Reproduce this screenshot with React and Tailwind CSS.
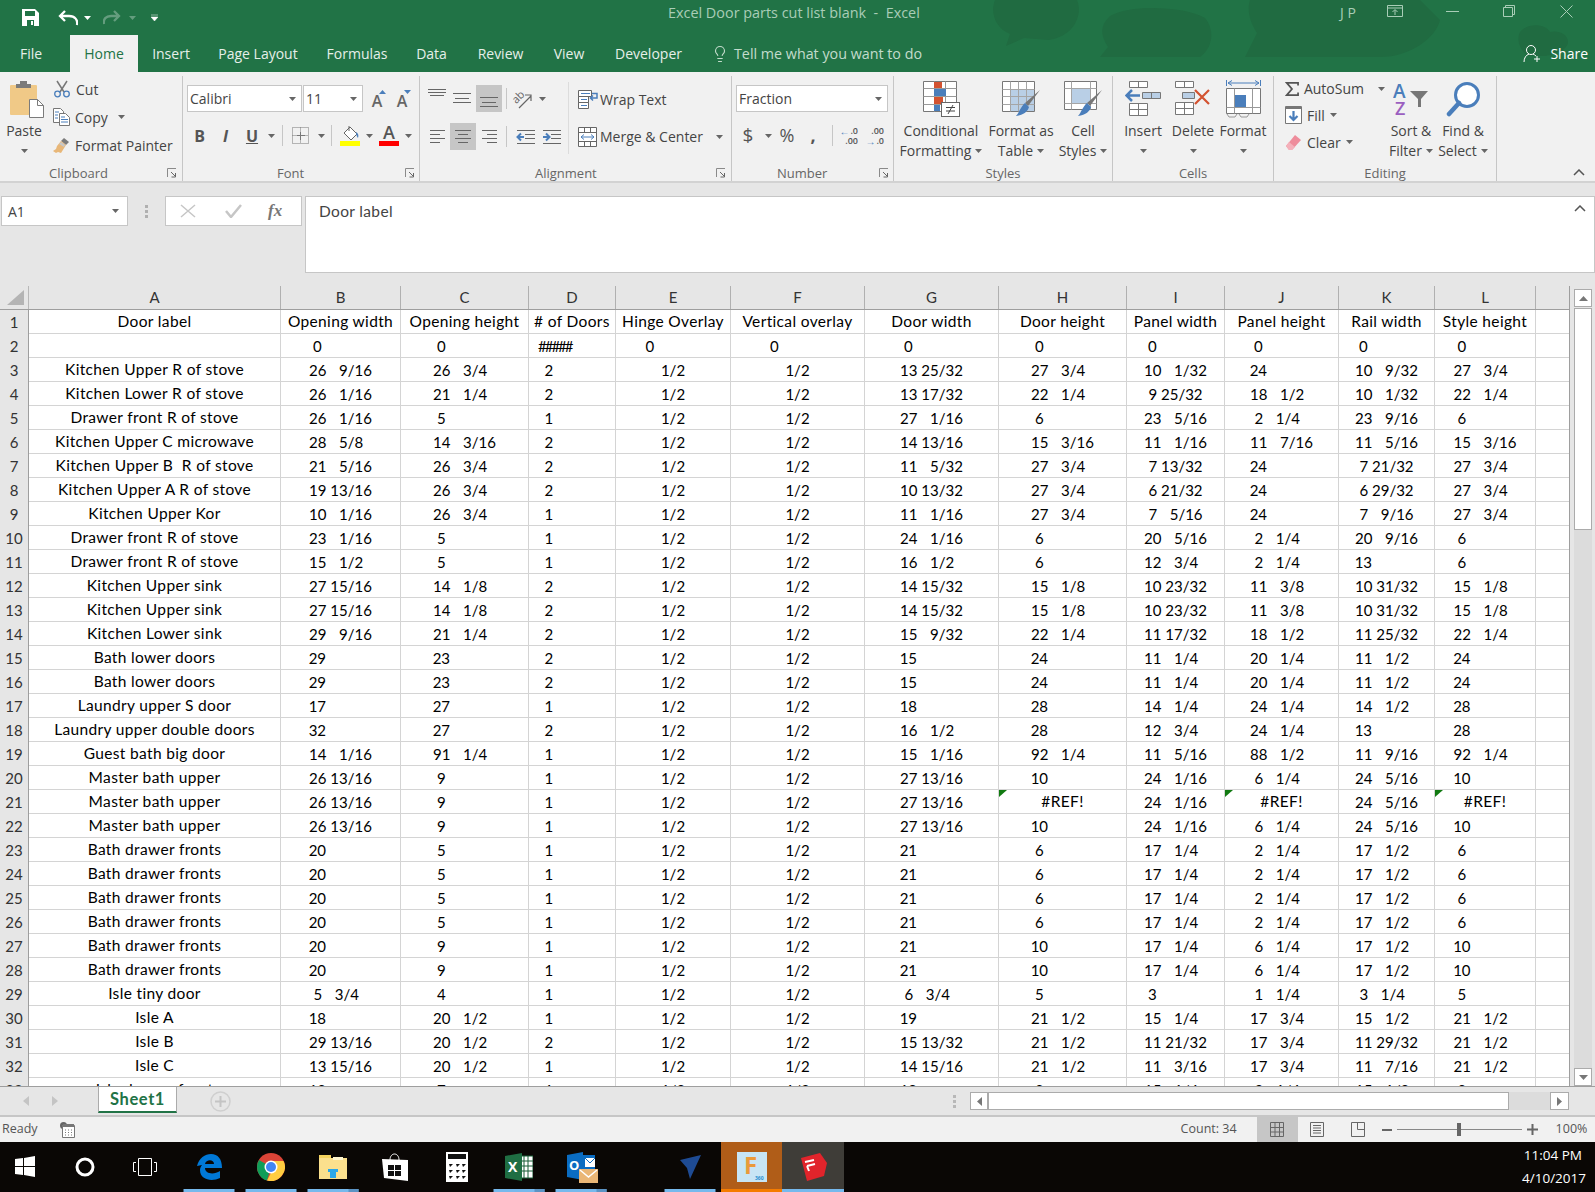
import { Lightbulb } from "lucide-react";

const gridCols = "grid grid-cols-[29px_252px_120px_128px_87px_115px_134px_134px_128px_98px_114px_96px_101px_35px]";
const letters = ["A", "B", "C", "D", "E", "F", "G", "H", "I", "J", "K", "L"];
const headers = ["Door label", "Opening width", "Opening height", "# of Doors", "Hinge Overlay", "Vertical overlay", "Door width", "Door height", "Panel width", "Panel height", "Rail width", "Style height"];
const labelText = "text-[15.500px] tracking-[0.35px]";

const K = "\u2007";

// same padding excel gives a "# ??/??" format
function frac(value) {
  if (value === undefined || value.startsWith("#")) return value;
  const [whole, part] = value.split(" ");
  if (!part) return `${whole} ${K}${K}  ${K}${K}`;
  const [num, den] = part.split("/");
  return `${whole} ${num.length < 2 ? K : ""}${num}/${den}${den.length < 2 ? K : ""}`;
}

const rows = [
  ["Kitchen Upper R of stove", "26 9/16", "26 3/4", "2", "13 25/32", "27 3/4", "10 1/32", "24", "10 9/32", "27 3/4"],
  ["Kitchen Lower R of stove", "26 1/16", "21 1/4", "2", "13 17/32", "22 1/4", "9 25/32", "18 1/2", "10 1/32", "22 1/4"],
  ["Drawer front R of stove", "26 1/16", "5", "1", "27 1/16", "6", "23 5/16", "2 1/4", "23 9/16", "6"],
  ["Kitchen Upper C microwave", "28 5/8", "14 3/16", "2", "14 13/16", "15 3/16", "11 1/16", "11 7/16", "11 5/16", "15 3/16"],
  ["Kitchen Upper B  R of stove", "21 5/16", "26 3/4", "2", "11 5/32", "27 3/4", "7 13/32", "24", "7 21/32", "27 3/4"],
  ["Kitchen Upper A R of stove", "19 13/16", "26 3/4", "2", "10 13/32", "27 3/4", "6 21/32", "24", "6 29/32", "27 3/4"],
  ["Kitchen Upper Kor", "10 1/16", "26 3/4", "1", "11 1/16", "27 3/4", "7 5/16", "24", "7 9/16", "27 3/4"],
  ["Drawer front R of stove", "23 1/16", "5", "1", "24 1/16", "6", "20 5/16", "2 1/4", "20 9/16", "6"],
  ["Drawer front R of stove", "15 1/2", "5", "1", "16 1/2", "6", "12 3/4", "2 1/4", "13", "6"],
  ["Kitchen Upper sink", "27 15/16", "14 1/8", "2", "14 15/32", "15 1/8", "10 23/32", "11 3/8", "10 31/32", "15 1/8"],
  ["Kitchen Upper sink", "27 15/16", "14 1/8", "2", "14 15/32", "15 1/8", "10 23/32", "11 3/8", "10 31/32", "15 1/8"],
  ["Kitchen Lower sink", "29 9/16", "21 1/4", "2", "15 9/32", "22 1/4", "11 17/32", "18 1/2", "11 25/32", "22 1/4"],
  ["Bath lower doors", "29", "23", "2", "15", "24", "11 1/4", "20 1/4", "11 1/2", "24"],
  ["Bath lower doors", "29", "23", "2", "15", "24", "11 1/4", "20 1/4", "11 1/2", "24"],
  ["Laundry upper S door", "17", "27", "1", "18", "28", "14 1/4", "24 1/4", "14 1/2", "28"],
  ["Laundry upper double doors", "32", "27", "2", "16 1/2", "28", "12 3/4", "24 1/4", "13", "28"],
  ["Guest bath big door", "14 1/16", "91 1/4", "1", "15 1/16", "92 1/4", "11 5/16", "88 1/2", "11 9/16", "92 1/4"],
  ["Master bath upper", "26 13/16", "9", "1", "27 13/16", "10", "24 1/16", "6 1/4", "24 5/16", "10"],
  ["Master bath upper", "26 13/16", "9", "1", "27 13/16", "#REF!", "24 1/16", "#REF!", "24 5/16", "#REF!"],
  ["Master bath upper", "26 13/16", "9", "1", "27 13/16", "10", "24 1/16", "6 1/4", "24 5/16", "10"],
  ["Bath drawer fronts", "20", "5", "1", "21", "6", "17 1/4", "2 1/4", "17 1/2", "6"],
  ["Bath drawer fronts", "20", "5", "1", "21", "6", "17 1/4", "2 1/4", "17 1/2", "6"],
  ["Bath drawer fronts", "20", "5", "1", "21", "6", "17 1/4", "2 1/4", "17 1/2", "6"],
  ["Bath drawer fronts", "20", "5", "1", "21", "6", "17 1/4", "2 1/4", "17 1/2", "6"],
  ["Bath drawer fronts", "20", "9", "1", "21", "10", "17 1/4", "6 1/4", "17 1/2", "10"],
  ["Bath drawer fronts", "20", "9", "1", "21", "10", "17 1/4", "6 1/4", "17 1/2", "10"],
  ["Isle tiny door", "5 3/4", "4", "1", "6 3/4", "5", "3", "1 1/4", "3 1/4", "5"],
  ["Isle A", "18", "20 1/2", "1", "19", "21 1/2", "15 1/4", "17 3/4", "15 1/2", "21 1/2"],
  ["Isle B", "29 13/16", "20 1/2", "2", "15 13/32", "21 1/2", "11 21/32", "17 3/4", "11 29/32", "21 1/2"],
  ["Isle C", "13 15/16", "20 1/2", "1", "14 15/16", "21 1/2", "11 3/16", "17 3/4", "11 7/16", "21 1/2"],
  ["Isle drawer front", "18", "7", "1", "19", "8", "15 1/4", "3 1/4", "15 1/2", "8"],
];

function Caret({ color = "#666" }) {
  return (
    <svg width="7" height="4" viewBox="0 0 7 4" className="shrink-0">
      <path d="M0 0h7L3.5 4z" fill={color} />
    </svg>
  );
}

function Lines({ w = 20, h = 27, lines }) {
  return (
    <svg width={w} height={h} viewBox={`0 0 ${w} ${h}`}>
      {lines.map(([a, b, y]) => (
        <path key={y} d={`M${a} ${y + 0.5}H${b}`} stroke="#666" />
      ))}
    </svg>
  );
}

function Slot({ className = "", children }) {
  return <div className={`flex h-[27px] shrink-0 items-center justify-center ${className}`}>{children}</div>;
}

function Sep() {
  return <div className="h-[21px] w-px shrink-0 bg-[#c6c6c6]" />;
}

function Launcher() {
  return (
    <svg width="10" height="10" viewBox="0 0 10 10" className="shrink-0">
      <path d="M.5 9V.5H9" fill="none" stroke="#8a8a8a" />
      <path d="M4 4l4 4M8.5 5v4h-4" fill="none" stroke="#666" />
    </svg>
  );
}

function GroupLabel({ children, className = "" }) {
  return (
    <div className={`flex h-[16px] items-center pt-[2px] text-[13px] leading-none text-[#666] ${className}`}>
      {children}
    </div>
  );
}

function BigButton({ icon, top, bottom, className = "" }) {
  return (
    <div className={`flex shrink-0 flex-col items-center ${className}`}>
      <div className="flex h-[45px] items-center">{icon}</div>
      <div className="h-[20px] whitespace-nowrap leading-[20px]">{top}</div>
      <div className="flex h-[20px] items-center gap-[4px] whitespace-nowrap leading-[20px]">
        {bottom}
        <Caret />
      </div>
    </div>
  );
}

function Combo({ className = "", text }) {
  return (
    <div className={`flex h-[27px] items-center justify-between border border-[#c6c6c6] bg-white pl-[2px] pr-[5px] text-[14px] ${className}`}>
      <span>{text}</span>
      <Caret />
    </div>
  );
}

function PasteIcon() {
  return (
    <svg width="34" height="38" viewBox="0 0 34 38">
      <rect x="0" y="5" width="27" height="30" rx="1" fill="#f0c987" />
      <path d="M10 4V1h7v3h4v4H6V4z" fill="#7b7b7b" />
      <path d="M19.500 19.500h8l6 6v12h-14z" fill="#fff" stroke="#7b7b7b" />
      <path d="M27.500 19.500v6h6" fill="none" stroke="#7b7b7b" />
    </svg>
  );
}

function ScissorsIcon() {
  return (
    <svg width="18" height="18" viewBox="0 0 18 18">
      <path d="M4 1l7 11M14 1L7 12" stroke="#777" strokeWidth="1.500" fill="none" />
      <circle cx="4.500" cy="14" r="2.800" fill="none" stroke="#4a7ebb" strokeWidth="1.300" />
      <circle cx="13.500" cy="14" r="2.800" fill="none" stroke="#4a7ebb" strokeWidth="1.300" />
    </svg>
  );
}

function CopyIcon() {
  return (
    <svg width="17" height="18" viewBox="0 0 17 18">
      <path d="M.5.500h7l3 3v11H.5z" fill="#fff" stroke="#777" />
      <path d="M6.500 5.500h6l4 4v8h-10z" fill="#fff" stroke="#777" />
      <path d="M2 4h4M2 7h3M2 10h3M8 9h4M8 11.500h7M8 14h7" stroke="#4a7ebb" />
    </svg>
  );
}

function PainterIcon() {
  return (
    <svg width="17" height="17" viewBox="0 0 17 17">
      <path d="M11 1l5 4-3 3-5-4z" fill="#7b7b7b" />
      <path d="M8 4l5 4-5 8-3-1-2 1-3-2 3-2 1-3z" fill="#e8b778" />
      <path d="M8 5l4 3-1 2-5-3z" fill="#c8c8c8" />
    </svg>
  );
}

function FontAIcon({ up }) {
  return (
    <div className="relative flex h-[22px] w-[14px] items-end justify-center text-[16px] font-semibold leading-[18px] text-[#666]">
      A
      <svg width="7" height="4" viewBox="0 0 7 4" className="absolute right-[-2px] top-[2px]">
        <path d={up ? "M0 4h7L3.500 0z" : "M0 0h7L3.500 4z"} fill="#4a7ebb" />
      </svg>
    </div>
  );
}

function BordersIcon() {
  return (
    <svg width="17" height="17" viewBox="0 0 17 17">
      <path d="M.5.500h16v16H.5zM8.500.5v16M.5 8.500h16" fill="none" stroke="#777" strokeDasharray="1 1" />
      <path d="M5 8.500h8M8.500 5v8" stroke="#777" />
    </svg>
  );
}

function FillIcon() {
  return (
    <div className="flex w-[20px] flex-col items-center">
      <svg width="20" height="15" viewBox="0 0 20 15">
        <path d="M10 1l7 7-6 6-7-7z" fill="#fff" stroke="#666" />
        <path d="M9 0v5" stroke="#666" />
        <path d="M16 6c2 1 3 3 2 6-1-1-2-3-2-6z" fill="#4a7ebb" />
      </svg>
      <div className="h-[5px] w-[20px] bg-[#ffff00]" />
    </div>
  );
}

function FontColorIcon() {
  return (
    <div className="flex w-[20px] flex-col items-center">
      <span className="text-[18px] font-semibold leading-[15px] text-[#555]">A</span>
      <div className="mt-[1px] h-[5px] w-[20px] bg-[#ff0000]" />
    </div>
  );
}

function OrientIcon() {
  return (
    <svg width="22" height="20" viewBox="0 0 22 20">
      <text x="1" y="13" fontSize="11" fill="#666" transform="rotate(-45 6 9)" fontFamily="Open Sans">ab</text>
      <path d="M8 19L20 7M14 6h6v6" fill="none" stroke="#666" strokeWidth="1.200" />
    </svg>
  );
}

function IndentIcon({ increase }) {
  return (
    <svg width="20" height="14" viewBox="0 0 20 14">
      <path d="M1 .500h18M9 4.500h10M9 8.500h10M1 13.500h18" stroke="#666" />
      {increase ? (
        <path d="M1 7h6M4 3.500L7.500 7 4 10.500" fill="none" stroke="#4a7ebb" strokeWidth="2" />
      ) : (
        <path d="M8 7H2M5 3.500L1.500 7 5 10.500" fill="none" stroke="#4a7ebb" strokeWidth="2" />
      )}
    </svg>
  );
}

function WrapIcon() {
  return (
    <svg width="20" height="19" viewBox="0 0 20 19">
      <path d="M.5.500h13v6H.5zM.5 6.500h10v6H.5zM.5 12.500h10v6H.5z" fill="#fff" stroke="#666" />
      <path d="M3 3.500h9M3 9.500h6M3 15.500h6" stroke="#4a7ebb" />
      <path d="M14 3.500h5v4.500h-6M15 5.500L12.500 8l2.500 2.500" fill="none" stroke="#4a7ebb" strokeWidth="1.500" />
    </svg>
  );
}

function MergeIcon() {
  return (
    <svg width="19" height="20" viewBox="0 0 19 20">
      <path d="M.5.500h18v19H.5zM.5 5.500h18M.5 14.500h18M6.500.5v5M12.500.5v5M6.500 14.500v5M12.500 14.500v5" fill="#fff" stroke="#666" />
      <path d="M3 10h13M6 7.500L3 10l3 2.500M13 7.500l3 2.500-3 2.500" fill="none" stroke="#4a7ebb" />
    </svg>
  );
}

function DecimalIcon({ more }) {
  return (
    <div className="flex w-[18px] flex-col text-[9px] font-semibold leading-[10px] text-[#555]">
      <div className="flex h-[10px] items-center justify-end gap-[1px]">
        {more && <span className="text-[10px] leading-none text-[#4a7ebb]">←</span>}
        <span>{more ? ".0" : ".00"}</span>
      </div>
      <div className="flex h-[10px] items-center justify-end gap-[1px]">
        {!more && <span className="text-[10px] leading-none text-[#4a7ebb]">→</span>}
        <span>{more ? ".00" : ".0"}</span>
      </div>
    </div>
  );
}

function CondIcon() {
  return (
    <svg width="37" height="36" viewBox="0 0 37 36">
      <path d="M.5.500h33v30H.5z" fill="#fff" stroke="#777" />
      <path d="M11.500.5v30M22.500.5v30M.5 7.500h33M.5 15.500h33M.5 23.500h33" stroke="#999" />
      <rect x="11" y="1" width="8" height="6" fill="#d35230" />
      <rect x="11" y="8" width="12" height="7" fill="#4a7ebb" />
      <rect x="11" y="16" width="9" height="7" fill="#d35230" />
      <rect x="11" y="24" width="6" height="6" fill="#4a7ebb" />
      <rect x="18.500" y="21.500" width="18" height="14" fill="#fff" stroke="#666" />
      <path d="M23 26.500h9M23 30h9M30 24l-5 9" stroke="#444" fill="none" />
    </svg>
  );
}

function BrushOverlay() {
  return (
    <>
      <path d="M38 9L26 25l-3-3z" fill="#777" />
      <path d="M23 22l4 4c-1 4-5 8-13 9 3-3 5-10 9-13z" fill="#4a7ebb" />
    </>
  );
}

function TableIcon() {
  return (
    <svg width="38" height="36" viewBox="0 0 38 36">
      <path d="M.5.500h32v30H.5z" fill="#fff" stroke="#777" />
      <rect x="8" y="8" width="24" height="22" fill="#b9cfe6" />
      <path d="M8.500.5v30M16.500.5v30M24.500.5v30M.5 8.500h32M.5 15.500h32M.5 23.500h32" stroke="#a5a5a5" />
      <BrushOverlay />
    </svg>
  );
}

function CellStyleIcon() {
  return (
    <svg width="38" height="36" viewBox="0 0 38 36">
      <path d="M.5.500h32v28H.5z" fill="#fff" stroke="#777" />
      <rect x="8" y="8" width="18" height="14" fill="#b9cfe6" />
      <path d="M7.500.5v28M26.500.5v28M.5 7.500h32M.5 22.500h32" stroke="#a5a5a5" />
      <BrushOverlay />
    </svg>
  );
}

function InsertIcon() {
  return (
    <svg width="36" height="36" viewBox="0 0 36 36">
      <path d="M4.500.5h18v6h-18zM13.500.5v6M4.500 22.500h18v12h-18zM4.500 28.500h18M13.500 22.500v12" fill="#fff" stroke="#777" />
      <path d="M17.500 11.500h18v6h-18zM26.500 11.500v6" fill="#b9cfe6" stroke="#777" />
      <path d="M15 14.500H2M7 9l-5.500 5.500L7 20" fill="none" stroke="#4a7ebb" strokeWidth="2.500" />
    </svg>
  );
}

function DeleteIcon() {
  return (
    <svg width="36" height="36" viewBox="0 0 36 36">
      <path d="M.5.500h18v6H.5zM9.500.5v6M.5 21.500h18v12H.5zM.5 27.500h18M9.500 21.500v12" fill="#fff" stroke="#777" />
      <path d="M7.500 11.500h12v6h-12z" fill="#b9cfe6" stroke="#777" />
      <path d="M20 9l14 14M34 9L20 23" stroke="#d35230" strokeWidth="2.200" />
    </svg>
  );
}

function FormatIcon() {
  return (
    <svg width="35" height="38" viewBox="0 0 35 38">
      <path d="M.5 0v6M34.500 0v6M2 3h31M6 .500L2 3l4 2.500M29 .500L33 3l-4 2.500" fill="none" stroke="#4a7ebb" />
      <path d="M.5 8.500h34v25H.5z" fill="#fff" stroke="#777" />
      <path d="M8.500 8.500v25M26.500 8.500v25M.5 27.500h34" stroke="#999" />
      <rect x="9" y="15" width="11" height="12" fill="#4a7ebb" />
      <path d="M1 34l2 3h6l2-3M13 34l2 3h6l2-3" fill="none" stroke="#999" />
    </svg>
  );
}

function SigmaIcon() {
  return (
    <svg width="16" height="16" viewBox="0 0 16 16">
      <path d="M15 4V1H2l6 7-6 7h13v-3" fill="none" stroke="#555" strokeWidth="2" />
    </svg>
  );
}

function FillDownIcon() {
  return (
    <svg width="17" height="18" viewBox="0 0 17 18">
      <path d="M.5.500h16v17H.5z" fill="#fff" stroke="#777" />
      <path d="M1 1h15v2H1z" fill="#777" />
      <path d="M8.500 5v9M4.500 10l4 4 4-4" fill="none" stroke="#4a7ebb" strokeWidth="2.200" />
    </svg>
  );
}

function EraserIcon() {
  return (
    <svg width="17" height="17" viewBox="0 0 17 17">
      <path d="M10 1l6 5-9 10H4l-3-4z" fill="#ee8c9b" />
      <path d="M4 8l6 5-3 3H4l-3-4z" fill="#f4b0ba" />
    </svg>
  );
}

function SortIcon() {
  return (
    <svg width="36" height="34" viewBox="0 0 36 34">
      <text x="0" y="16" fontSize="19" fontWeight="600" fill="#4a7ebb" fontFamily="Open Sans">A</text>
      <text x="2" y="33" fontSize="18" fontWeight="600" fill="#9b5fc0" fontFamily="Open Sans">Z</text>
      <path d="M17 9h18l-7 8v8h-3v-8z" fill="#777" />
    </svg>
  );
}

function FindIcon() {
  return (
    <svg width="35" height="36" viewBox="0 0 35 36">
      <circle cx="21" cy="14" r="11.500" fill="#fff" stroke="#4a7ebb" strokeWidth="3" />
      <path d="M13 22L3 33" stroke="#4a7ebb" strokeWidth="4.500" strokeLinecap="round" />
    </svg>
  );
}

function Clipboard() {
  return (
    <div className="flex w-[183px] shrink-0 flex-col border-r border-[#c6c6c6]">
      <div className="flex h-[88px]">
        <div className="flex w-[50px] shrink-0 flex-col items-center pr-[2px]">
          <div className="flex h-[45px] items-center pl-[6px]">
            <PasteIcon />
          </div>
          <div className="h-[20px] leading-[20px]">Paste</div>
          <div className="flex h-[20px] items-center">
            <Caret />
          </div>
        </div>
        <div className="-mt-[1px] flex flex-col pl-[3px]">
          <div className="flex h-[28px] items-center gap-[5px]">
            <ScissorsIcon />
            Cut
          </div>
          <div className="flex h-[28px] items-center gap-[5px]">
            <CopyIcon />
            Copy
            <span className="ml-[5px]">
              <Caret />
            </span>
          </div>
          <div className="flex h-[28px] items-center gap-[5px] whitespace-nowrap">
            <PainterIcon />
            Format Painter
          </div>
        </div>
      </div>
      <GroupLabel className="pl-[49px]">
        Clipboard
        <span className="ml-[59px]">
          <Launcher />
        </span>
      </GroupLabel>
    </div>
  );
}

function FontGroup() {
  return (
    <div className="flex w-[237px] shrink-0 flex-col border-r border-[#c6c6c6]">
      <div className="flex h-[88px] flex-col gap-[10px] pl-[4px] pt-[9px]">
        <div className="flex h-[27px] items-center gap-[1px]">
          <Combo className="w-[115px]" text="Calibri" />
          <Combo className="w-[60px]" text="11" />
          <div className="ml-[6px]">
            <FontAIcon up />
          </div>
          <div className="ml-[10px]">
            <FontAIcon />
          </div>
        </div>
        <div className="flex h-[27px] items-center">
          <Slot className="w-[25px] text-[16px] font-bold text-[#555]">B</Slot>
          <Slot className="w-[27px] text-[16px] font-bold italic text-[#555]">I</Slot>
          <Slot className="w-[26px] text-[16px] font-bold text-[#555] underline">U</Slot>
          <Slot className="w-[12px]"><Caret /></Slot>
          <div className="w-[5px]" />
          <Sep />
          <Slot className="w-[34px]"><BordersIcon /></Slot>
          <Slot className="w-[9px]"><Caret /></Slot>
          <div className="w-[5px]" />
          <Sep />
          <Slot className="w-[33px] pl-[3px]"><FillIcon /></Slot>
          <Slot className="w-[9px]"><Caret /></Slot>
          <Slot className="w-[30px]"><FontColorIcon /></Slot>
          <Slot className="w-[8px]"><Caret /></Slot>
        </div>
      </div>
      <GroupLabel className="pl-[94px]">
        Font
        <span className="ml-[101px]">
          <Launcher />
        </span>
      </GroupLabel>
    </div>
  );
}

function AlignmentGroup() {
  return (
    <div className="flex w-[312px] shrink-0 flex-col border-r border-[#c6c6c6]">
      <div className="flex h-[88px]">
        <div className="flex w-[148px] shrink-0 flex-col gap-[11px] pl-[5px] pt-[9px]">
          <div className="flex h-[27px] items-center">
            <Slot className="w-[24px]"><Lines w={18} lines={[[0, 18, 4], [0, 18, 7], [2, 16, 10]]} /></Slot>
            <Slot className="w-[26px]"><Lines w={18} lines={[[0, 18, 8], [2, 16, 13], [0, 18, 17]]} /></Slot>
            <Slot className="ml-px w-[26px] bg-[#c6c6c6]"><Lines w={18} lines={[[0, 18, 12], [2, 16, 17], [0, 18, 21]]} /></Slot>
            <div className="w-[4px]" />
            <Sep />
            <Slot className="w-[30px]"><OrientIcon /></Slot>
            <Slot className="w-[10px]"><Caret /></Slot>
          </div>
          <div className="flex h-[27px] items-center">
            <Slot className="w-[25px]"><Lines w={15} lines={[[0, 15, 7], [0, 10, 11], [0, 15, 15], [0, 10, 19]]} /></Slot>
            <Slot className="w-[26px] bg-[#c6c6c6]"><Lines w={16} lines={[[0, 16, 7], [3, 13, 11], [0, 16, 15], [3, 13, 19]]} /></Slot>
            <Slot className="w-[26px]"><Lines w={15} lines={[[0, 15, 7], [5, 15, 11], [0, 15, 15], [5, 15, 19]]} /></Slot>
            <div className="w-[4px]" />
            <Sep />
            <div className="w-[6px]" />
            <Slot className="w-[26px]"><IndentIcon /></Slot>
            <Slot className="w-[26px]"><IndentIcon increase /></Slot>
          </div>
        </div>
        <div className="mt-[6px] h-[72px] w-px bg-[#dcdcdc]" />
        <div className="flex flex-col gap-[11px] pl-[9px] pt-[9px]">
          <div className="flex h-[27px] items-center gap-[2px] whitespace-nowrap pt-[1px]">
            <WrapIcon />
            Wrap Text
          </div>
          <div className="flex h-[27px] items-center gap-[3px] whitespace-nowrap">
            <MergeIcon />
            Merge &amp; Center
            <span className="ml-[10px]">
              <Caret />
            </span>
          </div>
        </div>
      </div>
      <GroupLabel className="pl-[115px]">
        Alignment
        <span className="ml-[119px]">
          <Launcher />
        </span>
      </GroupLabel>
    </div>
  );
}

function NumberGroup() {
  return (
    <div className="flex w-[162px] shrink-0 flex-col border-r border-[#c6c6c6]">
      <div className="flex h-[88px] flex-col gap-[10px] pl-[4px] pt-[9px]">
        <Combo className="w-[152px]" text="Fraction" />
        <div className="flex h-[27px] items-center">
          <Slot className="w-[24px] text-[19px] text-[#555]">$</Slot>
          <Slot className="w-[16px]"><Caret /></Slot>
          <Slot className="w-[22px] text-[18px] text-[#555]">%</Slot>
          <Slot className="w-[30px] text-[18px] font-bold text-[#555]">,</Slot>
          <div className="w-[4px]" />
          <Sep />
          <Slot className="w-[32px]"><DecimalIcon more /></Slot>
          <Slot className="w-[20px]"><DecimalIcon /></Slot>
        </div>
      </div>
      <GroupLabel className="pl-[45px]">
        Number
        <span className="ml-[52px]">
          <Launcher />
        </span>
      </GroupLabel>
    </div>
  );
}

function StylesGroup() {
  return (
    <div className="flex w-[219px] shrink-0 flex-col border-r border-[#c6c6c6]">
      <div className="flex h-[88px] pl-[4px]">
        <BigButton className="w-[86px]" icon={<CondIcon />} top="Conditional" bottom="Formatting" />
        <BigButton className="w-[74px]" icon={<TableIcon />} top="Format as" bottom="Table" />
        <BigButton className="w-[50px]" icon={<CellStyleIcon />} top="Cell" bottom="Styles" />
      </div>
      <GroupLabel className="justify-center">Styles</GroupLabel>
    </div>
  );
}

function CellsGroup() {
  return (
    <div className="flex w-[161px] shrink-0 flex-col border-r border-[#c6c6c6]">
      <div className="flex h-[88px] pl-[5px]">
        <BigButton className="w-[50px]" icon={<InsertIcon />} top="Insert" />
        <BigButton className="w-[50px]" icon={<DeleteIcon />} top="Delete" />
        <BigButton className="w-[50px]" icon={<FormatIcon />} top="Format" />
      </div>
      <GroupLabel className="justify-center">Cells</GroupLabel>
    </div>
  );
}

function EditingGroup() {
  return (
    <div className="flex w-[223px] shrink-0 flex-col border-r border-[#c6c6c6]">
      <div className="flex h-[88px]">
        <div className="-mt-[1px] flex w-[111px] shrink-0 flex-col pl-[11px]">
          <div className="flex h-[27px] items-center gap-[5px]">
            <SigmaIcon />
            AutoSum
            <span className="ml-[9px]">
              <Caret />
            </span>
          </div>
          <div className="flex h-[26px] items-center gap-[5px]">
            <FillDownIcon />
            Fill
            <Caret />
          </div>
          <div className="flex h-[28px] items-center gap-[5px]">
            <EraserIcon />
            Clear
            <Caret />
          </div>
        </div>
        <BigButton className="w-[52px]" icon={<SortIcon />} top="Sort &" bottom="Filter" />
        <BigButton className="w-[52px]" icon={<FindIcon />} top="Find &" bottom="Select" />
      </div>
      <GroupLabel className="justify-center">Editing</GroupLabel>
    </div>
  );
}

function Ribbon() {
  return (
    <div className="flex h-[111px] shrink-0 border-b-2 border-[#d2d2d2] bg-[#f1f1f1] pt-[4px] text-[14px] text-[#444]">
      <Clipboard />
      <FontGroup />
      <AlignmentGroup />
      <NumberGroup />
      <StylesGroup />
      <CellsGroup />
      <EditingGroup />
      <div className="flex flex-1 items-end justify-end pb-[5px] pr-[10px]">
        <svg width="12" height="7" viewBox="0 0 12 7">
          <path d="M1 6l5-5 5 5" fill="none" stroke="#555" strokeWidth="1.500" />
        </svg>
      </div>
    </div>
  );
}

function TitleBar() {
  return (
    <div className="relative h-[72px] shrink-0 bg-[#217346] text-white">
      <svg width="695" height="57" viewBox="0 0 695 57" className="absolute right-0 top-0">
        <path d="M95 0h82c6 14-2 36-28 40l-25-2-18 8 4-12C95 28 90 12 95 0z" fill="#206b41" />
        <path d="M210 16c20-12 75-10 95 2 10 12 8 30-5 39H200l8-10c-8-12-8-22 2-31z" fill="#206b41" />
        <path d="M350 0h170l20 20c-4 18-30 37-60 37H345l12-24c-8-12-10-24-7-33z" fill="#206b41" />
        <path d="M620 32c8-10 26-8 30 0 8-2 18 2 18 10 0 8-14 12-22 14h-18c-8-6-12-16-8-24z" fill="#206b41" />
      </svg>
      <div className="relative flex h-[35px] items-center">
        <svg width="17" height="17" viewBox="0 0 17 17" className="ml-[22px]">
          <path d="M0 0h13l4 4v13H0z" fill="#fff" />
          <path d="M3 2h10v5H3z" fill="#217346" />
          <path d="M5 11h7v6H5z" fill="#217346" />
          <path d="M9 12h2v4H9z" fill="#fff" />
        </svg>
        <svg width="20" height="16" viewBox="0 0 20 16" className="ml-[19px]">
          <path d="M19 15c1-5-2-9-8-9H3M7 1L2 6l5 5" fill="none" stroke="#fff" strokeWidth="2.300" />
        </svg>
        <span className="ml-[6px]"><Caret color="#fff" /></span>
        <svg width="18" height="15" viewBox="0 0 18 15" className="ml-[12px] opacity-30">
          <path d="M1 14c-1-5 2-8 7-8h7M11 1l5 5-5 5" fill="none" stroke="#fff" strokeWidth="2.300" />
        </svg>
        <span className="ml-[8px] opacity-30"><Caret color="#fff" /></span>
        <svg width="7" height="7" viewBox="0 0 7 7" className="ml-[15px]">
          <path d="M0 1h7M0 3h7L3.500 7z" fill="#fff" stroke="#fff" strokeWidth=".5" />
        </svg>
        <div className="absolute left-[668px] top-[3px] whitespace-pre text-[14.400px] leading-[20px] text-[#a9cdb7]">
          Excel Door parts cut list blank  -  Excel
        </div>
        <div className="absolute left-[1340px] top-[3px] text-[14px] leading-[20px] text-[#a9cdb7]">J P</div>
        <svg width="16" height="12" viewBox="0 0 16 12" className="absolute left-[1387px] top-[5px]">
          <path d="M.5.500h15v11H.5zM.5 3h15M8 10V5M5.500 7L8 4.500 10.500 7" fill="none" stroke="#a9cdb7" />
        </svg>
        <svg width="13" height="1" viewBox="0 0 13 1" className="absolute left-[1446px] top-[11px]">
          <path d="M0 .5h13" stroke="#a9cdb7" />
        </svg>
        <svg width="12" height="12" viewBox="0 0 12 12" className="absolute left-[1503px] top-[5px]">
          <path d="M.5 2.500h9v9h-9zM2.500 2.500v-2h9v9h-2" fill="none" stroke="#a9cdb7" />
        </svg>
        <svg width="13" height="13" viewBox="0 0 13 13" className="absolute left-[1560px] top-[5px]">
          <path d="M.5.500l12 12M12.500.5l-12 12" stroke="#a9cdb7" />
        </svg>
      </div>
      <div className="relative flex h-[37px] items-stretch text-[14px] text-[#e6efe9]">
        <div className="flex w-[70px] items-center justify-center pr-[8px]">File</div>
        <div className="flex w-[68px] items-center justify-center bg-[#f1f1f1] text-[#217346]">Home</div>
        <div className="flex w-[15px]" />
        <div className="flex w-[36px] items-center justify-center">Insert</div>
        <div className="w-[29px]" />
        <div className="flex w-[80px] items-center justify-center whitespace-nowrap">Page Layout</div>
        <div className="w-[29px]" />
        <div className="flex w-[60px] items-center justify-center">Formulas</div>
        <div className="w-[29px]" />
        <div className="flex w-[31px] items-center justify-center">Data</div>
        <div className="w-[30px]" />
        <div className="flex w-[47px] items-center justify-center">Review</div>
        <div className="w-[29px]" />
        <div className="flex w-[32px] items-center justify-center">View</div>
        <div className="w-[29px]" />
        <div className="flex w-[69px] items-center justify-center">Developer</div>
        <div className="flex items-center gap-[5px] whitespace-nowrap pl-[28px] text-[14.300px] text-[#c3dccc]">
          <Lightbulb size={18} strokeWidth={1.500} />
          Tell me what you want to do
        </div>
        <div className="ml-auto flex items-center gap-[8px] pr-[7px] text-white">
          <svg width="19" height="19" viewBox="0 0 19 19">
            <circle cx="8" cy="6" r="4.500" fill="none" stroke="#fff" />
            <path d="M1 18c0-4 2-7 5-8M10 10c1 .5 2 1 3 2M14 12v6M11 15h6" fill="none" stroke="#fff" />
          </svg>
          Share
        </div>
      </div>
    </div>
  );
}

function FormulaBar() {
  return (
    <div className="flex h-[103px] shrink-0 items-start bg-[#e6e6e6] pt-[13px] text-[14px] text-[#444]">
      <div className="ml-[1px] flex h-[30px] w-[127px] items-center justify-between border border-[#c6c6c6] bg-white pl-[6px] pr-[8px]">
        A1
        <Caret />
      </div>
      <div className="flex h-[30px] w-[37px] flex-col items-center justify-center gap-[2px]">
        <div className="h-[3px] w-[3px] bg-[#b0b0b0]" />
        <div className="h-[3px] w-[3px] bg-[#b0b0b0]" />
        <div className="h-[3px] w-[3px] bg-[#b0b0b0]" />
      </div>
      <div className="flex h-[30px] w-[137px] items-center border border-[#c6c6c6] bg-white">
        <svg width="16" height="14" viewBox="0 0 16 14" className="ml-[14px]">
          <path d="M1 1l14 12M15 1L1 13" stroke="#c6c6c6" strokeWidth="1.500" />
        </svg>
        <svg width="17" height="14" viewBox="0 0 17 14" className="ml-[29px]">
          <path d="M1 7l5 6L16 1" fill="none" stroke="#c6c6c6" strokeWidth="2.500" />
        </svg>
        <span className="ml-[26px] font-['Liberation_Serif',serif] text-[17px] font-bold italic text-[#777]">fx</span>
      </div>
      <div className="ml-[3px] flex h-[77px] flex-1 items-start justify-between border border-[#c6c6c6] bg-white pl-[13px] pr-[8px] pt-[3px]">
        <span className={`font-['Lato',sans-serif] ${labelText}`}>Door label</span>
        <svg width="12" height="7" viewBox="0 0 12 7" className="mt-[5px]">
          <path d="M1 6l5-5 5 5" fill="none" stroke="#555" strokeWidth="1.500" />
        </svg>
      </div>
    </div>
  );
}

function ErrorMark() {
  return (
    <svg width="8" height="7" viewBox="0 0 8 7" className="absolute left-0 top-0">
      <path d="M0 0h8L0 7z" fill="#117a11" />
    </svg>
  );
}

function Row({ num, children }) {
  return (
    <div className={`${gridCols} h-[24px] border-b border-[#d4d4d4]`}>
      <div className="flex items-center justify-center border-r border-[#9e9e9e] bg-[#e6e6e6] pt-px text-[#333]">{num}</div>
      {children}
      <div />
    </div>
  );
}

function Cell({ value, center, label }) {
  const err = value === "#REF!";
  return (
    <div className={`relative flex items-center justify-center whitespace-pre border-r border-[#d4d4d4] ${label || err ? labelText : "pt-px"}`}>
      {err && <ErrorMark />}
      {center || err ? value : frac(value)}
    </div>
  );
}

function Grid() {
  return (
    <div className="h-[800px] w-[1570px] overflow-hidden border-r border-[#9e9e9e] bg-white font-['Lato',sans-serif] text-[15px] text-black">
      <div className={`${gridCols} h-[24px] border-b border-[#9e9e9e] bg-[#e6e6e6] text-[#333]`}>
        <div className="flex items-end justify-end border-r border-[#b8b8b8]">
          <svg width="19" height="17" viewBox="0 0 19 17" className="mb-[2px] mr-[2px]">
            <path d="M17 0v15H0z" fill="#b4b4b4" />
          </svg>
        </div>
        {letters.map((l) => (
          <div key={l} className="flex items-center justify-center border-r border-[#b0b0b0]">{l}</div>
        ))}
        <div className="border-r border-[#b0b0b0]" />
      </div>
      <Row num={1}>
        {headers.map((h) => (
          <Cell key={h} value={h} center label />
        ))}
      </Row>
      <Row num={2}>
        <Cell value="" center />
        <Cell value="0" />
        <Cell value="0" />
        <div className="flex items-center border-r border-[#d4d4d4] pl-[9px] pt-px tracking-[-2px]">#####</div>
        <Cell value="0" />
        <Cell value="0" />
        <Cell value="0" />
        <Cell value="0" />
        <Cell value="0" />
        <Cell value="0" />
        <Cell value="0" />
        <Cell value="0" />
      </Row>
      {rows.map((r, i) => (
        <Row key={i} num={i + 3}>
          <Cell value={r[0]} center label />
          <Cell value={r[1]} />
          <Cell value={r[2]} />
          <Cell value={r[3]} />
          <Cell value="1/2" center />
          <Cell value="1/2" center />
          <Cell value={r[4]} />
          <Cell value={r[5]} />
          <Cell value={r[6]} />
          <Cell value={r[7]} />
          <Cell value={r[8]} />
          <Cell value={r[9]} />
        </Row>
      ))}
    </div>
  );
}

function VScroll() {
  return (
    <div className="flex h-[800px] flex-1 flex-col bg-[#e6e6e6] pl-[4px] pr-[3px] pt-[3px]">
      <div className="flex h-[18px] items-center justify-center border border-[#ababab] bg-white">
        <svg width="9" height="5" viewBox="0 0 9 5"><path d="M0 5h9L4.500 0z" fill="#777" /></svg>
      </div>
      <div className="mt-[1px] h-[222px] border border-[#ababab] bg-white" />
      <div className="flex-1 bg-[#dcdcdc]" />
      <div className="flex h-[18px] items-center justify-center border border-[#ababab] bg-white">
        <svg width="9" height="5" viewBox="0 0 9 5"><path d="M0 0h9L4.500 5z" fill="#777" /></svg>
      </div>
    </div>
  );
}

function SheetBar() {
  return (
    <div className="flex h-[29px] shrink-0 items-start border-t border-[#9e9e9e] bg-[#e6e6e6]">
      <svg width="7" height="10" viewBox="0 0 7 10" className="ml-[23px] mt-[9px]"><path d="M6 0v10L0 5z" fill="#c4c4c4" /></svg>
      <svg width="7" height="10" viewBox="0 0 7 10" className="ml-[22px] mt-[9px]"><path d="M0 0v10l6-5z" fill="#c4c4c4" /></svg>
      <div className="ml-[39px] flex h-[26px] w-[79px] items-center justify-center border-x border-b-[2px] border-x-[#ababab] border-b-[#217346] bg-white font-['Lato',sans-serif] text-[16.500px] font-bold tracking-[0.6px] text-[#217346]">
        Sheet1
      </div>
      <svg width="21" height="21" viewBox="0 0 21 21" className="ml-[33px] mt-[4px]">
        <circle cx="10.500" cy="10.500" r="9.500" fill="none" stroke="#cfcfcf" strokeWidth="1.500" />
        <path d="M10.500 5v11M5 10.500h11" stroke="#c4c4c4" strokeWidth="2" />
      </svg>
      <div className="ml-[722px] mt-[8px] flex w-[3px] flex-col gap-[2px]">
        <div className="h-[3px] bg-[#b8b8b8]" />
        <div className="h-[3px] bg-[#b8b8b8]" />
        <div className="h-[3px] bg-[#b8b8b8]" />
      </div>
      <div className="ml-[14px] mt-[5px] flex h-[18px] w-[599px]">
        <div className="flex w-[18px] items-center justify-center border border-[#ababab] bg-white">
          <svg width="5" height="9" viewBox="0 0 5 9"><path d="M5 0v9L0 4.500z" fill="#777" /></svg>
        </div>
        <div className="w-[521px] border border-[#ababab] bg-white" />
        <div className="flex-1 bg-[#dcdcdc]" />
        <div className="flex w-[19px] items-center justify-center border border-[#ababab] bg-white">
          <svg width="5" height="9" viewBox="0 0 5 9"><path d="M0 0v9l5-4.500z" fill="#777" /></svg>
        </div>
      </div>
    </div>
  );
}

function StatusBar() {
  return (
    <div className="flex h-[27px] shrink-0 items-center border-t-2 border-[#c6c6c6] bg-[#f1f1f1] text-[12.500px] text-[#555]">
      <span className="ml-[2px]">Ready</span>
      <svg width="15" height="16" viewBox="0 0 15 16" className="ml-[22px]">
        <circle cx="3.500" cy="3.500" r="3.500" fill="#666" />
        <path d="M2.500 3.500h12v12h-12z" fill="#fff" stroke="#777" />
        <path d="M3 2h11v3H3z" fill="#777" />
        <path d="M5 8h1M8 8h1M11 8h1M5 10.500h1M8 10.500h1M11 10.500h1M5 13h1M8 13h1M11 13h1" stroke="#777" />
      </svg>
      <span className="ml-[1106px] whitespace-nowrap">Count: 34</span>
      <div className="ml-[20px] flex h-full w-[41px] items-center justify-center bg-[#c6c6c6]">
        <svg width="14" height="15" viewBox="0 0 14 15">
          <path d="M.5.500h13v14H.5zM.5 5.500h13M.5 10h13M5 .5v14M9.500.5v14" fill="none" stroke="#666" />
        </svg>
      </div>
      <svg width="14" height="15" viewBox="0 0 14 15" className="ml-[12px]">
        <path d="M.5.500h13v14H.5z" fill="none" stroke="#666" />
        <path d="M3 3.500h8M3 6h8M3 8.500h8M3 11h8" stroke="#666" />
      </svg>
      <svg width="14" height="15" viewBox="0 0 14 15" className="ml-[27px]">
        <path d="M.5.500h13v14H.5zM6.500.5v7h7" fill="none" stroke="#666" />
      </svg>
      <div className="ml-[17px] h-[2px] w-[10px] bg-[#666]" />
      <div className="relative ml-[5px] h-px w-[125px] bg-[#888]">
        <div className="absolute left-[60px] top-[-6px] h-[13px] w-[4px] bg-[#666]" />
      </div>
      <svg width="11" height="11" viewBox="0 0 11 11" className="ml-[5px]">
        <path d="M0 5.500h11M5.500 0v11" stroke="#666" strokeWidth="2" />
      </svg>
      <span className="ml-[18px]">100%</span>
    </div>
  );
}

const winPath = "M0 3l8-1v8H0zM9 2l11-2v10H9zM0 11h8v8l-8-1zM9 11h11v10L9 19z";

function TaskIcon({ className = "", line = false, split = false, children }) {
  return (
    <div className={`relative flex h-full shrink-0 items-center justify-center ${className}`}>
      {children}
      {line && (
        <div className="absolute bottom-0 left-1/2 flex h-[3px] w-[51px] -translate-x-1/2 justify-end bg-[#76b9ed]">
          {split && <div className="h-full w-[10px] bg-[#5b93c4]" />}
        </div>
      )}
    </div>
  );
}

function TaskBar() {
  return (
    <div className="relative flex h-[50px] shrink-0 bg-[#0a0705]">
      <TaskIcon className="w-[55px] pb-[1px] pr-[5px]">
        <svg width="20" height="21" viewBox="0 0 20 21"><path d={winPath} fill="#fff" /></svg>
      </TaskIcon>
      <TaskIcon className="w-[60px]">
        <svg width="20" height="20" viewBox="0 0 20 20"><circle cx="10" cy="10" r="8" fill="none" stroke="#fff" strokeWidth="3" /></svg>
      </TaskIcon>
      <TaskIcon className="w-[63px] pr-[3px]">
        <svg width="24" height="18" viewBox="0 0 24 18">
          <path d="M5.500.5h13v17h-13zM3 4.500H.5v9H3M21 4.500h2.500v9H21" fill="none" stroke="#fff" />
        </svg>
      </TaskIcon>
      <TaskIcon className="w-[62px]" line>
        <svg width="25" height="26" viewBox="0 0 25 26">
          <path d="M0 12C2 4 8 0 14 0c7 0 11 5 11 14H8c0 6 9 7 15 3v7c-8 4-20 2-20-8 0-2 1-4 2-5-2 0-3 1-5 1zm8-2h9c0-5-8-5-9 0z" fill="#0078d7" />
        </svg>
      </TaskIcon>
      <TaskIcon className="w-[62px]" line>
        <svg width="28" height="28" viewBox="0 0 28 28">
          <circle cx="14" cy="14" r="14" fill="#db4437" />
          <path d="M14 14L2 7A14 14 0 0 0 10 27.500z" fill="#0f9d58" />
          <path d="M14 8h12.500A14 14 0 0 1 10 27.500L16 16z" fill="#ffcd40" />
          <circle cx="14" cy="14" r="6.500" fill="#fff" />
          <circle cx="14" cy="14" r="5" fill="#4285f4" />
        </svg>
      </TaskIcon>
      <TaskIcon className="w-[62px]" line split>
        <svg width="28" height="24" viewBox="0 0 28 24">
          <path d="M0 0h12v3H0z" fill="#f4d35e" />
          <path d="M0 3h28v21H0z" fill="#fbe08d" />
          <path d="M14 2h10v3H14z" fill="#fff6cf" />
          <path d="M9 14h10v3h-2v6H11v-6H9z" fill="#2aa7e8" />
        </svg>
      </TaskIcon>
      <TaskIcon className="w-[62px]">
        <svg width="26" height="28" viewBox="0 0 26 28">
          <path d="M8 7c0-8 9-8 9 0" fill="none" stroke="#fff" />
          <path d="M0 6l26 1v21L2 25z" fill="#fff" />
          <path d="M6 12h6v5H6zM13 12h6v5h-6zM6 18h6v5H6zM13 18h6v5h-6z" fill="#111" />
        </svg>
      </TaskIcon>
      <TaskIcon className="w-[62px]">
        <svg width="22" height="30" viewBox="0 0 22 30">
          <path d="M0 0h22v30H0z" fill="#fff" />
          <path d="M2 2h18v5H2z" fill="#111" />
          <path d="M3 12l4 0-3 3zM10 12h4l-3 3zM16 12h4l-3 3zM3 18l4 0-3 3zM10 18h4l-3 3zM16 18h4l-3 3zM3 24l4 0-3 3zM10 24h4l-3 3zM16 24h4l-3 3z" fill="#111" />
        </svg>
      </TaskIcon>
      <TaskIcon className="w-[62px]" line split>
        <svg width="28" height="28" viewBox="0 0 28 28">
          <path d="M16 3h12v22H16z" fill="#fff" stroke="#185c37" />
          <path d="M19 3v22M23 3v22M16 8h12M16 13h12M16 18h12" stroke="#185c37" />
          <path d="M0 3l17-3v28L0 25z" fill="#1f6e43" />
          <text x="3" y="19" fontSize="14" fontWeight="700" fill="#fff" fontFamily="Open Sans">X</text>
        </svg>
      </TaskIcon>
      <TaskIcon className="w-[62px]" line split>
        <svg width="31" height="31" viewBox="0 0 31 31" className="ml-[3px]">
          <path d="M16 3h12v16H16z" fill="#0a6cc2" />
          <path d="M18 6h10v9H18z" fill="#fff" />
          <path d="M18 6l5 5 5-5" fill="none" stroke="#0a6cc2" />
          <path d="M0 3l16-3v28L0 25z" fill="#0a6cc2" />
          <text x="2" y="18" fontSize="13" fontWeight="700" fill="#fff" fontFamily="Open Sans">O</text>
          <path d="M12 17h19v14H12z" fill="#eab676" />
          <path d="M13 18l8.500 7 8.500-7" fill="none" stroke="#fff" strokeWidth="1.500" />
        </svg>
      </TaskIcon>
      <div className="w-[47px] shrink-0" />
      <TaskIcon className="w-[62px]" line>
        <svg width="21" height="25" viewBox="0 0 21 25">
          <path d="M0 5l21-5-11 24-3-11z" fill="#1e4b94" />
        </svg>
      </TaskIcon>
      <TaskIcon className="w-[61px] bg-[#b05d18]">
        <svg width="30" height="30" viewBox="0 0 30 30">
          <rect width="30" height="30" fill="#c7e5f5" />
          <text x="7" y="22" fontSize="24" fontWeight="700" fill="#ea9a3b" fontFamily="Open Sans">F</text>
          <text x="18" y="28" fontSize="5" fontWeight="700" fill="#2a8fd0" fontFamily="Open Sans">360</text>
        </svg>
        <div className="absolute bottom-0 left-0 right-0 h-[3px] bg-[#f57c00]" />
      </TaskIcon>
      <TaskIcon className="w-[62px] bg-[#3f3d38]">
        <svg width="27" height="28" viewBox="0 0 27 28">
          <path d="M1 5L20 0l7 10-3 13-17 5z" fill="#e1242b" />
          <path d="M5 9l9-2M7 13l8-2M7 13l2 5" stroke="#fff" strokeWidth="2" fill="none" />
        </svg>
        <div className="absolute bottom-0 left-0 right-0 h-[3px] bg-[#76b9ed]" />
      </TaskIcon>
      <div className="ml-auto flex flex-col items-end gap-[6px] pr-[9px] pt-[5px] text-[13.500px] leading-[17px] text-white">
        <span className="pr-[4px]">11:04 PM</span>
        <span>4/10/2017</span>
      </div>
    </div>
  );
}

export default function App() {
  return (
    <div className="flex h-[1192px] w-[1595px] flex-col overflow-hidden bg-[#e6e6e6] font-['Open_Sans',sans-serif] text-[13px]">
      <TitleBar />
      <Ribbon />
      <FormulaBar />
      <div className="flex h-[800px] shrink-0">
        <Grid />
        <VScroll />
      </div>
      <SheetBar />
      <StatusBar />
      <TaskBar />
    </div>
  );
}
